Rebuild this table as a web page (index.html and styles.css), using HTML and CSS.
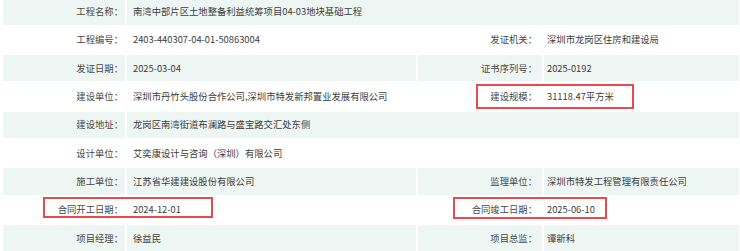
FILE: index.html
```html
<!DOCTYPE html>
<html lang="zh-CN">
<head>
<meta charset="utf-8">
<title>工程信息</title>
<link rel="stylesheet" href="styles.css">
</head>
<body>
<div class="sheet">
  <table class="info">
    <colgroup>
      <col class="c-label1">
      <col class="c-value1">
      <col class="c-label2">
      <col class="c-value2">
    </colgroup>
    <tbody>
      <tr class="shade">
        <th class="lbl">工程名称：</th>
        <td class="val" colspan="3">南湾中部片区土地整备利益统筹项目04-03地块基础工程</td>
      </tr>
      <tr>
        <th class="lbl">工程编号：</th>
        <td class="val">2403-440307-04-01-50863004</td>
        <th class="lbl lbl2">发证机关：</th>
        <td class="val val2">深圳市龙岗区住房和建设局</td>
      </tr>
      <tr class="shade">
        <th class="lbl">发证日期：</th>
        <td class="val">2025-03-04</td>
        <th class="lbl lbl2">证书序列号：</th>
        <td class="val val2">2025-0192</td>
      </tr>
      <tr>
        <th class="lbl">建设单位：</th>
        <td class="val">深圳市丹竹头股份合作公司,深圳市特发新邦置业发展有限公司</td>
        <th class="lbl lbl2">建设规模：</th>
        <td class="val val2">31118.47平方米</td>
      </tr>
      <tr class="shade">
        <th class="lbl">建设地址：</th>
        <td class="val" colspan="3">龙岗区南湾街道布澜路与盛宝路交汇处东侧</td>
      </tr>
      <tr>
        <th class="lbl">设计单位：</th>
        <td class="val" colspan="3">艾奕康设计与咨询（深圳）有限公司</td>
      </tr>
      <tr class="shade">
        <th class="lbl">施工单位：</th>
        <td class="val">江苏省华建建设股份有限公司</td>
        <th class="lbl lbl2">监理单位：</th>
        <td class="val val2">深圳市特发工程管理有限责任公司</td>
      </tr>
      <tr>
        <th class="lbl">合同开工日期：</th>
        <td class="val">2024-12-01</td>
        <th class="lbl lbl2">合同竣工日期：</th>
        <td class="val val2">2025-06-10</td>
      </tr>
      <tr class="shade">
        <th class="lbl">项目经理：</th>
        <td class="val">徐益民</td>
        <th class="lbl lbl2">项目总监：</th>
        <td class="val val2">谭新科</td>
      </tr>
    </tbody>
  </table>
  <div class="mark mark-scale"></div>
  <div class="mark mark-start"></div>
  <div class="mark mark-end"></div>
</div>
</body>
</html>
```

FILE: styles.css
```css
html, body {
  margin: 0;
  padding: 0;
  background: #ffffff;
  overflow: hidden;
}

body {
  font-family: "Microsoft YaHei", "Noto Sans CJK SC", "Noto Sans", sans-serif;
  font-size: 9.33px;
  color: #444444;
}

.sheet {
  position: relative;
  width: 740px;
  margin: -3.5px 0 0 1px;
}

.info {
  width: 740px;
  table-layout: fixed;
  border-collapse: separate;
  border-spacing: 2px;
}

.c-label1 { width: 122px; }
.c-value1 { width: 289px; }
.c-label2 { width: 124px; }
.c-value2 { width: 195px; }

.info th,
.info td {
  box-sizing: border-box;
  height: 26.33px;
  padding: 0 0 1px 0;
  font-weight: normal;
  vertical-align: middle;
  white-space: nowrap;
  line-height: 12px;
}

.info .lbl {
  text-align: right;
  padding-right: 2px;
  color: #474747;
}

.info .lbl2 {
  padding-right: 5px;
}

.info .val {
  text-align: left;
  padding-left: 6px;
  color: #3c3c3c;
}

.info .val2 {
  padding-left: 3px;
}

.shade th,
.shade td {
  background: #eef6f3;
}

.mark {
  position: absolute;
  box-sizing: border-box;
  border: 2px solid #e84a4f;
}

.mark-scale {
  left: 475px;
  top: 87.5px;
  width: 158px;
  height: 25px;
}

.mark-start {
  left: 42px;
  top: 200.5px;
  width: 170px;
  height: 21px;
}

.mark-end {
  left: 452px;
  top: 200.5px;
  width: 154px;
  height: 22px;
}
```
